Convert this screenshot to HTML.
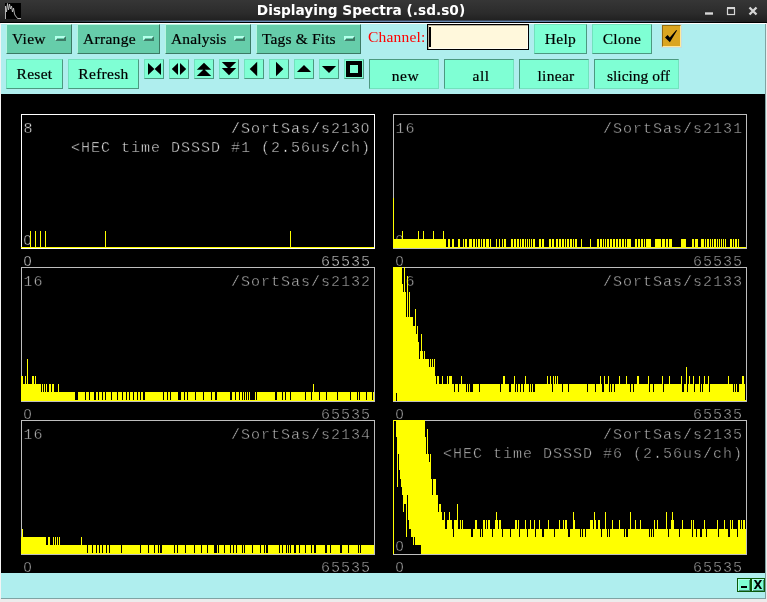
<!DOCTYPE html><html><head><meta charset="utf-8"><title>Displaying Spectra (.sd.s0)</title><style>
html,body{margin:0;padding:0;}
body{-webkit-font-smoothing:antialiased;width:767px;height:602px;overflow:hidden;position:relative;background:#afeeee;font-family:"Liberation Serif","DejaVu Serif",serif;font-size:15.5px;color:#000;}
.bt,.sk{letter-spacing:0.3px;}
.bt,.sk,.mb{-webkit-text-stroke:0.2px #000;}
.abs{position:absolute;}
#root{position:absolute;left:0;top:0;width:767px;height:602px;will-change:transform;}
#title{left:0;top:0;width:767px;height:23px;background:linear-gradient(#363636,#2b2b2b 60%,#1c1c1c);}
#title .t{position:absolute;left:0;width:722px;top:1px;text-align:center;color:#fff;font:bold 13.7px "DejaVu Sans","Liberation Sans",sans-serif;line-height:18px;white-space:nowrap;}
#wl{left:0;top:23px;width:767px;height:1px;background:#fff;}
#ll{left:0;top:23px;width:1px;height:580px;background:#f4f4f4;}
#rl{left:765px;top:24px;width:1px;height:575px;background:#7fa3a3;}
#rl2{left:766px;top:23px;width:1px;height:579px;background:#ececec;}
#bl2{left:1px;top:598px;width:765px;height:1px;background:#7fa3a3;}
#bl{left:0;top:598px;width:767px;height:4px;background:#ececec;}
.mb{position:absolute;top:24px;height:28px;background:#66cdaa;border:1px solid;border-color:#b5f5e0 #3b7a64 #3b7a64 #b5f5e0;white-space:nowrap;line-height:27px;}
.mb span{position:absolute;left:5px;top:0;letter-spacing:0.3px;}
.mb i{position:absolute;top:11px;width:7px;height:1px;background:#66cdaa;border:2px solid;border-color:#b4ffea #3d7a66 #3d7a66 #b4ffea;}
.bt{position:absolute;background:#7fffd4;border:1px solid;border-color:#72e2bd #4c9980 #4c9980 #72e2bd;text-align:center;white-space:nowrap;}
.sk{position:absolute;background:#7fffd4;border:1px solid;border-color:#4c9980 #72e2bd #72e2bd #4c9980;text-align:center;white-space:nowrap;}
.ib{position:absolute;top:59px;width:18px;height:18px;background:#7fffd4;border:1px solid;border-color:#72e2bd #4c9980 #4c9980 #72e2bd;}
.cv{position:absolute;left:1px;top:94px;}
.m{position:absolute;font-family:"Liberation Mono","DejaVu Sans Mono",monospace;font-size:15px;letter-spacing:1px;line-height:16px;white-space:pre;color:#c4c4c4;-webkit-text-stroke:0.5px #000;}
.m.w{color:#f0f0f0;}
.r{text-align:right;}
.z{font-family:"Liberation Sans",sans-serif;font-size:14.5px;letter-spacing:1.94px;line-height:0;}
</style></head><body><div id="root">
<div id="title" class="abs"><svg class="abs" style="left:5px;top:3px" width="16" height="16" viewBox="0 0 16 16"><rect width="16" height="16" fill="#000"/><path d="M0.5 16V3L1.5 9L2.5 0.5L3.5 7L4.5 1L5.5 6L6.5 3L7.5 9L8.5 5L9.5 11L10.5 13L11.5 14L12.5 15.5H16" fill="none" stroke="#c4c4c4" stroke-width="0.9"/></svg><div class="t">Displaying Spectra (.sd.s0)</div>
<svg class="abs" style="left:700px;top:0" width="64" height="22" viewBox="700 0 64 22"><path d="M705 13.5h8" stroke="#d6d6d6" stroke-width="2.4" fill="none"/><rect x="727.5" y="8.5" width="7" height="6" fill="none" stroke="#d6d6d6" stroke-width="1.2"/><path d="M727 8h8" stroke="#d6d6d6" stroke-width="2" fill="none"/><path d="M749.5 7.5l7 7m0-7l-7 7" stroke="#d6d6d6" stroke-width="2.3" fill="none"/></svg>
<div class="abs" style="left:0;top:20px;width:767px;height:1px;background:linear-gradient(to right,rgba(60,72,92,0) 4%,rgba(60,72,92,1) 30%,rgba(60,72,92,1) 70%,rgba(60,72,92,0) 96%)"></div><div class="abs" style="left:0;top:21px;width:767px;height:1px;background:linear-gradient(to right,rgba(104,138,180,0) 3%,rgba(104,138,180,1) 30%,rgba(104,138,180,1) 70%,rgba(104,138,180,0) 97%)"></div><div class="abs" style="left:0;top:22px;width:767px;height:1px;background:#000"></div>
</div>
<div id="wl" class="abs"></div>
<div class="mb" style="left:6px;width:64px"><span style="letter-spacing:0.3px">View</span><i style="left:48px"></i></div>
<div class="mb" style="left:77px;width:81px"><span style="letter-spacing:0.3px">Arrange</span><i style="left:65px"></i></div>
<div class="mb" style="left:165px;width:84px"><span style="letter-spacing:0.15px">Analysis</span><i style="left:68px"></i></div>
<div class="mb" style="left:256px;width:103px"><span style="letter-spacing:0.15px">Tags &amp; Fits</span><i style="left:87px"></i></div>
<div class="abs" style="left:368px;top:28px;color:#ff0000;line-height:18px;letter-spacing:0.2px">Channel:</div>
<div class="abs" style="left:427px;top:24px;width:100px;height:24px;border:1px solid #000;background:#fff8dc;box-shadow:inset 1px 1px 0 #b9b29c,inset -1px -1px 0 #fffdf2;"><div class="abs" style="left:1px;top:2px;width:2px;height:20px;background:#000"></div></div>
<div class="bt" style="left:534px;top:24px;width:51px;height:28px;line-height:28px;letter-spacing:0.3px;padding-left:0px">Help</div>
<div class="bt" style="left:592px;top:24px;width:58px;height:28px;line-height:28px;letter-spacing:0.3px;padding-left:0px">Clone</div>
<div class="abs" style="left:662px;top:25px;width:17px;height:20px;background:#daa520;border:1px solid;border-color:#8f6a12 #ffe89a #ffe89a #8f6a12;box-shadow:0 0 0 1px rgba(200,216,216,.7);"><svg class="abs" style="left:0;top:0" width="17" height="20" viewBox="663 26 17 20"><path d="M665 37.6L667.6 34.9L669.8 37.4L676.3 29.9L677 30.6L669.9 42.2Z" fill="#000"/></svg></div>
<div class="bt" style="left:6px;top:59px;width:55px;height:28px;line-height:28px;letter-spacing:0.3px;padding-left:0px">Reset</div>
<div class="bt" style="left:68px;top:59px;width:69px;height:28px;line-height:28px;letter-spacing:0.3px;padding-left:0px">Refresh</div>
<div class="ib" style="left:144px"><svg class="abs" style="left:-1px;top:-1px" width="20" height="20" viewBox="144 59 20 20"><path d="M148 63v12l6.4-6zM161 63v12l-6.4-6z"/></svg></div>
<div class="ib" style="left:169px"><svg class="abs" style="left:-1px;top:-1px" width="20" height="20" viewBox="169 59 20 20"><path d="M178 63v12l-6.2-6zM180 63v12l6.2-6z"/></svg></div>
<div class="ib" style="left:194px"><svg class="abs" style="left:-1px;top:-1px" width="20" height="20" viewBox="194 59 20 20"><path d="M204 62.7l-7.2 7.1h14.4zM204 68.9l-7.2 7.1h14.4z"/></svg></div>
<div class="ib" style="left:219px"><svg class="abs" style="left:-1px;top:-1px" width="20" height="20" viewBox="219 59 20 20"><path d="M229 69.1l-7.2-7.1h14.4zM229 75.2l-7.2-7.1h14.4z"/></svg></div>
<div class="ib" style="left:244px"><svg class="abs" style="left:-1px;top:-1px" width="20" height="20" viewBox="244 59 20 20"><path d="M257.2 61.8v14.4l-7.5-7.2z"/></svg></div>
<div class="ib" style="left:269px"><svg class="abs" style="left:-1px;top:-1px" width="20" height="20" viewBox="269 59 20 20"><path d="M276 61.8v14.4l7.4-7.2z"/></svg></div>
<div class="ib" style="left:294px"><svg class="abs" style="left:-1px;top:-1px" width="20" height="20" viewBox="294 59 20 20"><path d="M304 64.9l-7.1 7.1h14.2z"/></svg></div>
<div class="ib" style="left:319px"><svg class="abs" style="left:-1px;top:-1px" width="20" height="20" viewBox="319 59 20 20"><path d="M329 73.1l-7.1-7.1h14.2z"/></svg></div>
<div class="ib" style="left:344px"><svg class="abs" style="left:-1px;top:-1px" width="20" height="20" viewBox="344 59 20 20"><path d="M346 61h16v16h-16zM350 65v8h8v-8z" fill-rule="evenodd" shape-rendering="crispEdges"/></svg></div>
<div class="sk" style="left:369px;top:59px;width:65px;height:28px;line-height:32px;letter-spacing:0.5px;padding-left:3px">new</div>
<div class="sk" style="left:444px;top:59px;width:64px;height:28px;line-height:32px;letter-spacing:0.5px;padding-left:4px">all</div>
<div class="sk" style="left:519px;top:59px;width:64px;height:28px;line-height:32px;letter-spacing:0.3px;padding-left:4px">linear</div>
<div class="sk" style="left:594px;top:59px;width:79px;height:28px;line-height:32px;letter-spacing:0px;padding-left:4px">slicing off</div>
<div class="abs" style="left:1px;top:94px;width:764px;height:479px;background:#000"></div>
<div class="m w" style="left:23.5px;top:122px">8</div>
<div class="m w r" style="left:171px;width:200px;top:122px">/SortSas/s213<span class="z">0</span></div>
<div class="m w r" style="left:71px;width:300px;top:141px">&lt;HEC time DSSSD #1 (2.56us/ch)</div>
<div class="m w" style="left:23.5px;top:234px"><span class="z">0</span></div>
<div class="m w" style="left:23.5px;top:255px"><span class="z">0</span></div>
<div class="m w r" style="left:271px;width:100px;top:255px">65535</div>
<div class="m" style="left:395.5px;top:122px">16</div>
<div class="m r" style="left:543px;width:200px;top:122px">/SortSas/s2131</div>
<div class="m" style="left:395.5px;top:234px"><span class="z">0</span></div>
<div class="m" style="left:395.5px;top:255px"><span class="z">0</span></div>
<div class="m r" style="left:643px;width:100px;top:255px">65535</div>
<div class="m" style="left:23.5px;top:275px">16</div>
<div class="m r" style="left:171px;width:200px;top:275px">/SortSas/s2132</div>
<div class="m" style="left:23.5px;top:408px"><span class="z">0</span></div>
<div class="m r" style="left:271px;width:100px;top:408px">65535</div>
<div class="m" style="left:395.5px;top:275px"> 6</div>
<div class="m r" style="left:543px;width:200px;top:275px">/SortSas/s2133</div>
<div class="m" style="left:395.5px;top:408px"><span class="z">0</span></div>
<div class="m r" style="left:643px;width:100px;top:408px">65535</div>
<div class="m" style="left:23.5px;top:428px">16</div>
<div class="m r" style="left:171px;width:200px;top:428px">/SortSas/s2134</div>
<div class="m" style="left:23.5px;top:561px"><span class="z">0</span></div>
<div class="m r" style="left:271px;width:100px;top:561px">65535</div>
<div class="m" style="left:395.5px;top:428px"></div>
<div class="m r" style="left:543px;width:200px;top:428px">/SortSas/s2135</div>
<div class="m r" style="left:443px;width:300px;top:447px">&lt;HEC time DSSSD #6 (2.56us/ch)</div>
<div class="m" style="left:395.5px;top:540px"><span class="z">0</span></div>
<div class="m" style="left:395.5px;top:561px"><span class="z">0</span></div>
<div class="m r" style="left:643px;width:100px;top:561px">65535</div>
<svg class="cv" width="764" height="479" viewBox="1 94 764 479" shape-rendering="crispEdges">
<path d="M21.5 114.5H374.5V248.5H21.5z" fill="none" stroke="#ffffff" stroke-width="1"/>
<path d="M21 247.5H374" fill="none" stroke="#ffff00" stroke-width="1"/>
<path d="M30 231h1v16h-1zM35 231h1v16h-1zM40 231h1v16h-1zM45 231h1v16h-1zM105 231h1v16h-1zM290 231h1v16h-1z" fill="#ffff00"/>
<path d="M393.5 114.5H746.5V248.5H393.5z" fill="none" stroke="#bebebe" stroke-width="1"/>
<path d="M393 247.5H746" fill="none" stroke="#ffff00" stroke-width="1"/>
<path d="M393 198h1v49h-1zM394 239h8v8h-8zM402 231h1v16h-1zM403 239h15v8h-15zM418 231h1v16h-1zM419 239h4v8h-4zM423 231h1v16h-1zM424 239h9v8h-9zM433 231h1v16h-1zM434 239h9v8h-9zM443 231h1v16h-1zM444 239h2v8h-2zM448 239h2v8h-2zM452 239h2v8h-2zM458 239h2v8h-2zM463 239h1v8h-1zM465 239h2v8h-2zM469 239h3v8h-3zM473 239h2v8h-2zM476 239h1v8h-1zM478 239h2v8h-2zM481 239h1v8h-1zM483 239h2v8h-2zM486 239h3v8h-3zM490 239h1v8h-1zM496 239h1v8h-1zM499 239h1v8h-1zM502 239h1v8h-1zM504 239h2v8h-2zM511 239h2v8h-2zM514 239h2v8h-2zM517 239h2v8h-2zM520 239h1v8h-1zM522 239h2v8h-2zM525 239h1v8h-1zM527 239h1v8h-1zM529 239h1v8h-1zM531 239h1v8h-1zM533 239h2v8h-2zM539 239h2v8h-2zM542 239h2v8h-2zM549 239h2v8h-2zM552 239h2v8h-2zM556 239h2v8h-2zM559 239h2v8h-2zM562 239h2v8h-2zM565 239h1v8h-1zM567 239h2v8h-2zM570 239h2v8h-2zM573 239h1v8h-1zM575 239h2v8h-2zM581 239h1v8h-1zM590 239h1v8h-1zM597 239h2v8h-2zM600 239h2v8h-2zM603 239h1v8h-1zM605 239h1v8h-1zM607 239h2v8h-2zM610 239h2v8h-2zM613 239h2v8h-2zM616 239h2v8h-2zM619 239h2v8h-2zM622 239h2v8h-2zM625 239h1v8h-1zM627 239h4v8h-4zM635 239h2v8h-2zM638 239h2v8h-2zM641 239h2v8h-2zM644 239h1v8h-1zM646 239h5v8h-5zM655 239h6v8h-6zM662 239h3v8h-3zM666 239h2v8h-2zM669 239h3v8h-3zM681 239h5v8h-5zM692 239h2v8h-2zM695 239h3v8h-3zM701 239h3v8h-3zM705 239h1v8h-1zM707 239h2v8h-2zM710 239h1v8h-1zM712 239h1v8h-1zM714 239h2v8h-2zM717 239h1v8h-1zM719 239h1v8h-1zM721 239h1v8h-1zM723 239h1v8h-1zM725 239h1v8h-1zM730 239h2v8h-2zM733 239h1v8h-1zM735 239h2v8h-2zM738 239h1v8h-1z" fill="#ffff00"/>
<path d="M21.5 267.5H374.5V401.5H21.5z" fill="none" stroke="#bebebe" stroke-width="1"/>
<path d="M21 400.5H374" fill="none" stroke="#ffff00" stroke-width="1"/>
<path d="M21 376h2v24h-2zM23 384h2v16h-2zM25 376h1v24h-1zM26 384h1v16h-1zM27 359h1v41h-1zM28 384h4v16h-4zM32 376h2v24h-2zM34 384h1v16h-1zM35 376h1v24h-1zM36 384h5v16h-5zM41 392h1v8h-1zM42 384h1v16h-1zM43 392h1v8h-1zM44 384h1v16h-1zM45 392h1v8h-1zM46 384h1v16h-1zM47 392h2v8h-2zM49 384h2v16h-2zM51 392h1v8h-1zM52 384h2v16h-2zM54 392h4v8h-4zM58 384h1v16h-1zM59 392h16v8h-16zM78 392h7v8h-7zM86 392h3v8h-3zM90 392h4v8h-4zM96 392h2v8h-2zM99 392h3v8h-3zM103 392h2v8h-2zM106 392h5v8h-5zM112 392h5v8h-5zM118 392h4v8h-4zM123 392h3v8h-3zM127 392h2v8h-2zM130 392h3v8h-3zM134 392h3v8h-3zM138 392h2v8h-2zM141 392h2v8h-2zM145 392h18v8h-18zM164 392h3v8h-3zM168 392h2v8h-2zM171 392h7v8h-7zM181 392h3v8h-3zM185 392h2v8h-2zM188 392h7v8h-7zM196 392h7v8h-7zM204 392h7v8h-7zM212 392h3v8h-3zM217 392h13v8h-13zM232 392h3v8h-3zM236 392h3v8h-3zM240 392h2v8h-2zM243 392h1v8h-1zM245 392h1v8h-1zM247 392h1v8h-1zM249 392h1v8h-1zM255 392h1v8h-1zM257 392h18v8h-18zM277 392h5v8h-5zM283 392h2v8h-2zM286 392h4v8h-4zM291 392h14v8h-14zM306 392h5v8h-5zM312 392h1v8h-1zM313 384h1v16h-1zM314 392h5v8h-5zM320 392h6v8h-6zM327 392h10v8h-10zM338 392h12v8h-12zM351 392h6v8h-6zM358 392h1v8h-1zM360 392h6v8h-6zM367 392h5v8h-5zM373 392h1v8h-1z" fill="#ffff00"/>
<path d="M393.5 267.5H746.5V401.5H393.5z" fill="none" stroke="#bebebe" stroke-width="1"/>
<path d="M393 400.5H746" fill="none" stroke="#ffff00" stroke-width="1"/>
<path d="M393 267h9v133h-9zM402 284h1v116h-1zM403 292h1v108h-1zM404 267h1v133h-1zM405 292h1v108h-1zM406 317h1v83h-1zM407 276h1v124h-1zM408 317h1v83h-1zM409 292h1v108h-1zM410 317h3v83h-3zM413 326h2v74h-2zM415 309h1v91h-1zM416 334h1v66h-1zM417 326h1v74h-1zM418 342h1v58h-1zM419 359h1v41h-1zM420 351h1v49h-1zM421 334h1v66h-1zM422 351h1v49h-1zM423 359h1v41h-1zM424 351h1v49h-1zM425 359h4v41h-4zM429 367h1v33h-1zM430 359h1v41h-1zM431 367h1v33h-1zM432 359h1v41h-1zM433 367h1v33h-1zM434 359h1v41h-1zM435 376h1v24h-1zM436 384h1v16h-1zM437 376h2v24h-2zM439 384h3v16h-3zM442 376h1v24h-1zM443 384h4v16h-4zM447 376h1v24h-1zM448 384h1v16h-1zM449 376h3v24h-3zM452 384h2v16h-2zM454 392h1v8h-1zM455 384h3v16h-3zM458 392h1v8h-1zM459 384h2v16h-2zM461 376h1v24h-1zM462 384h4v16h-4zM466 392h1v8h-1zM467 384h1v16h-1zM468 392h1v8h-1zM469 384h1v16h-1zM470 392h3v8h-3zM473 384h6v16h-6zM479 392h1v8h-1zM480 384h20v16h-20zM500 392h1v8h-1zM501 384h2v16h-2zM503 376h2v24h-2zM505 384h4v16h-4zM509 392h2v8h-2zM511 384h3v16h-3zM514 376h1v24h-1zM515 392h1v8h-1zM516 384h1v16h-1zM517 392h1v8h-1zM518 384h2v16h-2zM520 392h1v8h-1zM521 384h2v16h-2zM523 392h1v8h-1zM524 384h1v16h-1zM525 376h1v24h-1zM526 384h3v16h-3zM529 392h1v8h-1zM530 384h1v16h-1zM531 392h1v8h-1zM532 384h1v16h-1zM533 392h2v8h-2zM535 384h12v16h-12zM547 376h1v24h-1zM548 384h2v16h-2zM550 376h1v24h-1zM551 384h1v16h-1zM552 392h1v8h-1zM553 376h1v24h-1zM554 384h1v16h-1zM555 376h1v24h-1zM556 384h1v16h-1zM557 376h1v24h-1zM558 384h4v16h-4zM562 392h1v8h-1zM563 384h5v16h-5zM568 392h1v8h-1zM569 384h18v16h-18zM587 392h1v8h-1zM588 384h7v16h-7zM595 392h1v8h-1zM596 384h4v16h-4zM600 376h1v24h-1zM601 384h1v16h-1zM602 392h2v8h-2zM604 376h1v24h-1zM605 384h3v16h-3zM608 376h1v24h-1zM609 392h1v8h-1zM610 384h1v16h-1zM611 392h1v8h-1zM612 384h2v16h-2zM614 392h1v8h-1zM615 384h4v16h-4zM619 376h1v24h-1zM620 384h6v16h-6zM626 376h1v24h-1zM627 384h3v16h-3zM630 392h1v8h-1zM631 384h2v16h-2zM633 392h1v8h-1zM634 384h3v16h-3zM637 376h2v24h-2zM639 384h9v16h-9zM648 376h1v24h-1zM649 392h1v8h-1zM650 384h3v16h-3zM653 392h1v8h-1zM654 384h8v16h-8zM662 376h1v24h-1zM663 392h1v8h-1zM664 384h5v16h-5zM669 376h1v24h-1zM670 384h11v16h-11zM681 376h1v24h-1zM682 392h2v8h-2zM684 384h2v16h-2zM686 367h1v33h-1zM687 392h1v8h-1zM688 384h1v16h-1zM689 376h1v24h-1zM690 384h3v16h-3zM693 376h1v24h-1zM694 392h1v8h-1zM695 384h4v16h-4zM699 376h1v24h-1zM700 392h1v8h-1zM701 384h1v16h-1zM702 392h1v8h-1zM703 384h1v16h-1zM704 376h1v24h-1zM705 384h3v16h-3zM708 376h1v24h-1zM709 392h1v8h-1zM710 384h18v16h-18zM728 376h1v24h-1zM729 384h4v16h-4zM733 392h1v8h-1zM734 384h1v16h-1zM735 392h1v8h-1zM736 384h1v16h-1zM737 392h2v8h-2zM739 384h3v16h-3zM742 376h2v24h-2zM744 384h1v16h-1z" fill="#ffff00"/>
<path d="M396 393h1v8h-1z" fill="#000"/>
<path d="M21.5 420.5H374.5V554.5H21.5z" fill="none" stroke="#bebebe" stroke-width="1"/>
<path d="M21 553.5H374" fill="none" stroke="#ffff00" stroke-width="1"/>
<path d="M21 537h1v16h-1zM22 529h1v24h-1zM23 537h23v16h-23zM46 545h2v8h-2zM48 537h2v16h-2zM50 545h3v8h-3zM53 537h1v16h-1zM54 545h1v8h-1zM55 537h1v16h-1zM56 545h1v8h-1zM57 537h1v16h-1zM58 545h1v8h-1zM59 537h1v16h-1zM60 545h21v8h-21zM81 537h1v16h-1zM82 545h5v8h-5zM88 545h4v8h-4zM93 545h3v8h-3zM97 545h2v8h-2zM100 545h2v8h-2zM103 545h3v8h-3zM107 545h2v8h-2zM110 545h11v8h-11zM122 545h18v8h-18zM141 545h7v8h-7zM149 545h5v8h-5zM155 545h3v8h-3zM159 545h1v8h-1zM162 545h12v8h-12zM175 545h2v8h-2zM178 545h7v8h-7zM186 545h8v8h-8zM195 545h6v8h-6zM202 545h5v8h-5zM208 545h6v8h-6zM217 545h1v8h-1zM219 545h5v8h-5zM225 545h5v8h-5zM231 545h2v8h-2zM234 545h2v8h-2zM237 545h5v8h-5zM243 545h1v8h-1zM245 545h7v8h-7zM253 545h7v8h-7zM261 545h3v8h-3zM265 545h1v8h-1zM268 545h11v8h-11zM280 545h2v8h-2zM283 545h3v8h-3zM287 545h1v8h-1zM289 545h1v8h-1zM291 545h3v8h-3zM296 545h3v8h-3zM300 545h5v8h-5zM306 545h5v8h-5zM312 545h2v8h-2zM316 545h9v8h-9zM327 545h3v8h-3zM331 545h9v8h-9zM342 545h6v8h-6zM349 545h9v8h-9zM359 545h1v8h-1zM361 545h13v8h-13z" fill="#ffff00"/>
<path d="M393.5 420.5H746.5V554.5H393.5z" fill="none" stroke="#bebebe" stroke-width="1"/>
<path d="M421 553.5H746" fill="none" stroke="#ffff00" stroke-width="1"/>
<path d="M393 553.5h1" fill="none" stroke="#ffff00" stroke-width="1"/>
<path d="M393 420h1v133h-1zM394 420h2v1h-2zM396 420h1v17h-1zM397 420h1v67h-1zM398 420h1v34h-1zM399 420h1v50h-1zM400 420h1v59h-1zM401 420h1v67h-1zM402 420h1v75h-1zM403 420h1v92h-1zM404 420h2v84h-2zM406 420h1v117h-1zM407 420h1v75h-1zM408 420h1v100h-1zM409 420h2v109h-2zM411 420h2v117h-2zM413 420h1v125h-1zM414 420h1v117h-1zM415 420h6v125h-6zM421 420h4v133h-4zM425 437h1v116h-1zM426 454h1v99h-1zM427 429h1v124h-1zM428 454h1v99h-1zM429 462h1v91h-1zM430 454h1v99h-1zM431 479h1v74h-1zM432 495h1v58h-1zM433 479h3v74h-3zM436 495h2v58h-2zM438 512h1v41h-1zM439 504h2v49h-2zM441 512h1v41h-1zM442 520h2v33h-2zM444 512h1v41h-1zM445 529h2v24h-2zM447 520h2v33h-2zM449 512h1v41h-1zM450 520h2v33h-2zM452 529h1v24h-1zM453 537h1v16h-1zM454 520h3v33h-3zM457 504h1v49h-1zM458 529h2v24h-2zM460 520h1v33h-1zM461 529h1v24h-1zM462 520h1v33h-1zM463 529h8v24h-8zM471 537h2v16h-2zM473 529h2v24h-2zM475 520h2v33h-2zM477 529h3v24h-3zM480 537h1v16h-1zM481 529h1v24h-1zM482 537h1v16h-1zM483 520h2v33h-2zM485 529h1v24h-1zM486 520h1v33h-1zM487 529h1v24h-1zM488 520h2v33h-2zM490 529h2v24h-2zM492 537h1v16h-1zM493 529h2v24h-2zM495 520h1v33h-1zM496 512h1v41h-1zM497 520h1v33h-1zM498 529h1v24h-1zM499 520h2v33h-2zM501 529h1v24h-1zM502 537h1v16h-1zM503 529h7v24h-7zM510 537h1v16h-1zM511 529h4v24h-4zM515 520h2v33h-2zM517 529h1v24h-1zM518 520h1v33h-1zM519 537h1v16h-1zM520 529h5v24h-5zM525 520h1v33h-1zM526 529h1v24h-1zM527 537h1v16h-1zM528 529h2v24h-2zM530 520h1v33h-1zM531 529h3v24h-3zM534 520h1v33h-1zM535 537h1v16h-1zM536 529h3v24h-3zM539 520h1v33h-1zM540 529h2v24h-2zM542 537h2v16h-2zM544 529h4v24h-4zM548 520h1v33h-1zM549 529h5v24h-5zM554 537h1v16h-1zM555 529h4v24h-4zM559 520h1v33h-1zM560 529h3v24h-3zM563 520h1v33h-1zM564 529h1v24h-1zM565 520h2v33h-2zM567 529h1v24h-1zM568 537h2v16h-2zM570 529h3v24h-3zM573 512h1v41h-1zM574 520h1v33h-1zM575 529h5v24h-5zM580 537h1v16h-1zM581 529h1v24h-1zM582 537h1v16h-1zM583 529h2v24h-2zM585 537h1v16h-1zM586 529h4v24h-4zM590 520h3v33h-3zM593 529h1v24h-1zM594 512h1v41h-1zM595 520h1v33h-1zM596 529h2v24h-2zM598 520h2v33h-2zM600 529h1v24h-1zM601 537h1v16h-1zM602 529h3v24h-3zM605 512h1v41h-1zM606 529h1v24h-1zM607 537h1v16h-1zM608 529h1v24h-1zM609 537h1v16h-1zM610 529h2v24h-2zM612 520h1v33h-1zM613 529h6v24h-6zM619 520h1v33h-1zM620 529h4v24h-4zM624 537h1v16h-1zM625 529h1v24h-1zM626 537h2v16h-2zM628 529h2v24h-2zM630 512h1v41h-1zM631 529h4v24h-4zM635 520h1v33h-1zM636 529h4v24h-4zM640 520h1v33h-1zM641 529h8v24h-8zM649 537h1v16h-1zM650 529h1v24h-1zM651 537h1v16h-1zM652 529h1v24h-1zM653 537h1v16h-1zM654 520h1v33h-1zM655 529h2v24h-2zM657 520h1v33h-1zM658 529h8v24h-8zM666 512h1v41h-1zM667 529h1v24h-1zM668 537h1v16h-1zM669 529h2v24h-2zM671 520h1v33h-1zM672 512h1v41h-1zM673 520h1v33h-1zM674 529h5v24h-5zM679 537h1v16h-1zM680 529h2v24h-2zM682 520h1v33h-1zM683 529h8v24h-8zM691 520h1v33h-1zM692 537h1v16h-1zM693 520h1v33h-1zM694 529h2v24h-2zM696 537h1v16h-1zM697 529h3v24h-3zM700 537h2v16h-2zM702 529h2v24h-2zM704 520h1v33h-1zM705 529h1v24h-1zM706 537h1v16h-1zM707 529h10v24h-10zM717 520h1v33h-1zM718 537h1v16h-1zM719 529h5v24h-5zM724 520h1v33h-1zM725 529h3v24h-3zM728 537h2v16h-2zM730 520h1v33h-1zM731 529h1v24h-1zM732 520h1v33h-1zM733 529h4v24h-4zM737 537h1v16h-1zM738 520h2v33h-2zM740 529h1v24h-1zM741 520h1v33h-1zM742 529h1v24h-1zM743 520h2v33h-2zM745 529h1v24h-1z" fill="#ffff00"/>
</svg>
<div class="abs" style="left:737px;top:578px;width:12px;height:12px;background:#7fffd4;border:1px solid #0a5a0a;box-shadow:inset 1px 1px 0 #b4ffea,inset -1px -1px 0 #4c9980;"><div class="abs" style="left:3px;top:7px;width:6px;height:2px;background:#000"></div></div>
<div class="abs" style="left:751px;top:578px;width:12px;height:12px;background:#7fffd4;border:1px solid #0a5a0a;box-shadow:inset 1px 1px 0 #b4ffea,inset -1px -1px 0 #4c9980;font:bold 11.5px/12px 'DejaVu Sans','Liberation Sans',sans-serif;text-align:center;">X</div>
<div id="ll" class="abs"></div><div id="rl" class="abs"></div><div id="rl2" class="abs"></div><div id="bl" class="abs"></div><div id="bl2" class="abs"></div>
</div></body></html>
